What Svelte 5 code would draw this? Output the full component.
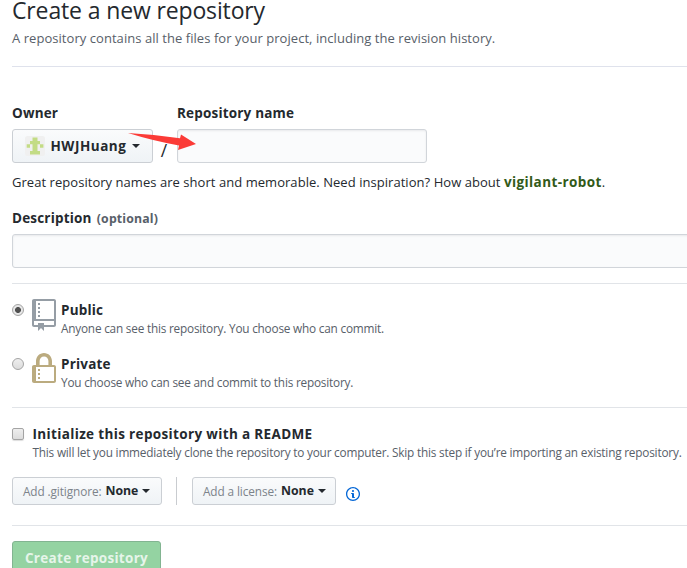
<script>
  let visibility = $state('public');
  let readme = $state(false);
</script>

<main>
  <h1>Create a new repository</h1>
  <p class="lead">A repository contains all the files for your project, including the revision history.</p>

  <section class="naming">
    <div class="fields">
      <div class="owner">
        <span class="label">Owner</span>
        <button class="btn owner-btn" type="button">
          <svg class="avatar" width="20" height="20" viewBox="0 0 20 20">
            <rect width="20" height="20" rx="2.5" fill="#f0f0f0" />
            <path fill="#c3dc85" d="M7.500 1.500h5V5H15v3.300H5V5h2.500zM1.700 8.300H5v3.400H1.700zM15 8.300h3.400v3.400H15zM7.500 8h5v7H15v3.500H5V15h2.500z" />
          </svg>
          <span class="login">HWJHuang</span><i class="caret"></i>
        </button>
      </div>
      <span class="slash">/</span>
      <div class="repo-name">
        <label class="label" for="name">Repository name</label>
        <input id="name" type="text" />
      </div>
      <svg class="arrow" width="70" height="20" viewBox="0 0 70 20">
        <path fill="#fb3b37" d="M0 1Q27 2.500 52 6.300L53 2.500L68 12L50 18L51 13.500Q24 8.500 0 1Z" />
      </svg>
    </div>
    <p class="hint">Great repository names are short and memorable. Need inspiration? How about <b>vigilant-robot</b>.</p>
    <label class="label desc" for="desc">Description <small>(optional)</small></label>
    <input id="desc" type="text" />
  </section>

  <section class="visibility">
    <label class="choice">
      <input type="radio" value="public" bind:group={visibility} />
      <svg width="24" height="32" viewBox="0 0 12 16" fill="#959da5"><path fill-rule="evenodd" d="M4 9H3V8h1v1zm0-3H3v1h1V6zm0-2H3v1h1V4zm0-2H3v1h1V2zm8-1v12c0 .55-.45 1-1 1H6v2l-1.500-1.500L3 16v-2H1c-.55 0-1-.45-1-1V1c0-.55.45-1 1-1h10c.55 0 1 .45 1 1zm-1 10H1v2h2v-1h3v1h5v-2zm0-10H2v9h9V1z" /></svg>
      <span class="text"><strong>Public</strong><span class="note">Anyone can see this repository. You choose who can commit.</span></span>
    </label>
    <label class="choice">
      <input type="radio" value="private" bind:group={visibility} />
      <svg width="24" height="32" viewBox="0 0 12 16" fill="#bbab7f"><path fill-rule="evenodd" d="M4 13H3v-1h1v1zm8-6v7c0 .55-.45 1-1 1H1c-.55 0-1-.45-1-1V7c0-.55.45-1 1-1h1V4c0-2.200 1.800-4 4-4s4 1.800 4 4v2h1c.55 0 1 .45 1 1zM3.800 6h4.410V4c0-1.220-.98-2.200-2.200-2.200-1.220 0-2.200.98-2.200 2.200v2H3.800zM11 7H2v7h9V7zM4 8H3v1h1V8zm0 2H3v1h1v-1z" /></svg>
      <span class="text"><strong>Private</strong><span class="note">You choose who can see and commit to this repository.</span></span>
    </label>
  </section>

  <section class="init">
    <label class="check">
      <input type="checkbox" bind:checked={readme} />
      <span class="text"><strong class="wide">Initialize this repository with a README</strong><span class="note">This will let you immediately clone the repository to your computer. Skip this step if you’re importing an existing repository.</span></span>
    </label>
    <div class="extras">
      <button class="btn small ignore" type="button"><span>Add .gitignore:</span><b>None</b><i class="caret"></i></button>
      <span class="sep"></span>
      <button class="btn small license" type="button"><span>Add a license:</span><b>None</b><i class="caret"></i></button>
      <svg class="info" width="14" height="16" viewBox="0 0 14 16" fill="#0366d6"><path fill-rule="evenodd" d="M6.300 5.690a.942.942 0 0 1-.28-.7c0-.28.09-.52.28-.7.19-.18.42-.28.7-.28.28 0 .52.09.7.28.18.19.28.42.28.7 0 .28-.09.52-.28.7a1 1 0 0 1-.7.3c-.28 0-.52-.11-.7-.3zM8 7.990c-.02-.25-.11-.48-.31-.69-.2-.19-.42-.3-.69-.31H6c-.27.02-.48.13-.69.31-.2.2-.3.44-.31.69h1v3c.02.27.11.5.31.69.2.2.42.31.69.31h1c.27 0 .48-.11.69-.31.2-.19.3-.42.31-.69H8V7.980v.01zM7 2.300c-3.140 0-5.700 2.540-5.700 5.680 0 3.140 2.560 5.700 5.700 5.700s5.700-2.550 5.700-5.700c0-3.150-2.560-5.690-5.700-5.690v.01zM7 .98c3.860 0 7 3.140 7 7s-3.140 7-7 7-7-3.120-7-7 3.140-7 7-7z" /></svg>
    </div>
  </section>

  <section class="submit">
    <button class="create" type="button" disabled>Create repository</button>
  </section>
</main>

<style>
  :global(body) { background: #fff; overflow: hidden; }
  main {
    box-sizing: border-box;
    height: 568px;
    padding-left: 12px;
    overflow: hidden;
    color: #24292e;
    font: 13px/20px "Open Sans", "Noto Sans", sans-serif;
    white-space: nowrap;
  }
  h1 { margin: 0; font-size: 23px; font-weight: 400; line-height: 20px; height: 28px; letter-spacing: -.14px; }
  p { margin: 0; }
  button, input { box-sizing: border-box; font-family: inherit; margin: 0; }
  svg { display: block; flex: none; }
  .lead { height: 38px; color: #586069; letter-spacing: .05px; }
  section { border-top: 1px solid #e1e4e8; box-sizing: border-box; }
  .naming { height: 217px; padding-top: 36px; border-color: #dfe2ec; }
  .fields { position: relative; display: flex; height: 60px; }
  .label, strong { display: block; font-size: 13.5px; font-weight: 700; line-height: 20px; letter-spacing: .18px; }
  .label { height: 26px; }
  .owner { width: 141px; }
  .btn {
    display: flex;
    align-items: center;
    padding: 0 12px;
    color: #24292e;
    border: 1px solid #cbcfd4;
    border-radius: 3px;
    background: linear-gradient(#fafbfc, #eff3f6);
  }
  .owner-btn { width: 141px; height: 34px; }
  .login { margin-left: 5.5px; width: 81.5px; text-align: left; font-size: 13.5px; font-weight: 700; letter-spacing: .52px; }
  .caret { flex: none; width: 0; border: 4px solid transparent; border-top-color: #24292e; border-bottom: 0; }
  .slash { width: 24px; padding: 39px 2px 0 0; font-size: 17.5px; text-align: center; line-height: 16px; box-sizing: border-box; }
  input[type='text'] {
    display: block;
    height: 34px;
    border: 1px solid #d1d5da;
    border-radius: 3px;
    background: #fafbfc;
    box-shadow: inset 0 1px 2px rgba(27, 31, 35, .075);
  }
  #name { width: 250px; }
  #desc { width: 720px; }
  .arrow { position: absolute; left: 116px; top: 28.5px; }
  .hint { padding-top: 9px; height: 27px; letter-spacing: .045px; }
  .hint b { color: #325a19; font-size: 13.5px; font-weight: 700; letter-spacing: .4px; }
  .desc { padding-top: 9px; height: 26px; }
  .desc small { margin-left: 1.5px; color: #586069; font-size: 12.3px; letter-spacing: .15px; }
  .visibility { height: 124px; padding-top: 15px; }
  .choice { display: flex; height: 54px; }
  .text { display: block; }
  .choice .text { margin-left: 5px; padding-top: 1px; }
  .note { display: block; color: #586069; font-size: 11.8px; line-height: 17px; letter-spacing: -.21px; }
  input[type='radio'], input[type='checkbox'] {
    appearance: none;
    flex: none;
    width: 12px;
    height: 12px;
    border: 1px solid #a4a4a4;
    border-radius: 50%;
    background: linear-gradient(#eee, #dcdcdc);
  }
  input[type='radio'] { margin: 5px 8px 0 0; }
  input[type='radio']:checked { background: radial-gradient(circle, #505050 0 2.6px, #e7e7e7 3.3px); }
  .init { height: 118px; padding-top: 16px; }
  .check { display: flex; height: 53px; }
  input[type='checkbox'] { margin: 4px 8.500px 0 0; border-radius: 2px; box-shadow: 0 1px 1px #ddd; }
  .check .text { padding-top: 0; }
  strong.wide { letter-spacing: .35px; }
  .check .note { letter-spacing: -.2px; }
  .extras { display: flex; }
  .small { height: 28px; padding: 0 10px; font-size: 11.8px; line-height: 18px; }
  .small span { color: #7c838a; letter-spacing: -.1px; }
  .small b { margin-left: 4px; font-size: 12.300px; font-weight: 700; }
  .small .caret { margin-left: 4px; }
  .ignore { width: 150px; }
  .license { width: 144px; }
  .sep { width: 1px; height: 28px; margin: 0 15px 0 14px; background: #c9ccd0; }
  .info { margin: 9px 0 0 10px; }
  .submit { padding-top: 15px; }
  .create {
    width: 149px;
    height: 34px;
    padding: 0;
    border: 1px solid #82b491;
    border-radius: 3px;
    background: #94d3a2;
    color: #e6f5ea;
    font-size: 13.5px;
    font-weight: 700;
    letter-spacing: .3px;
  }
</style>
